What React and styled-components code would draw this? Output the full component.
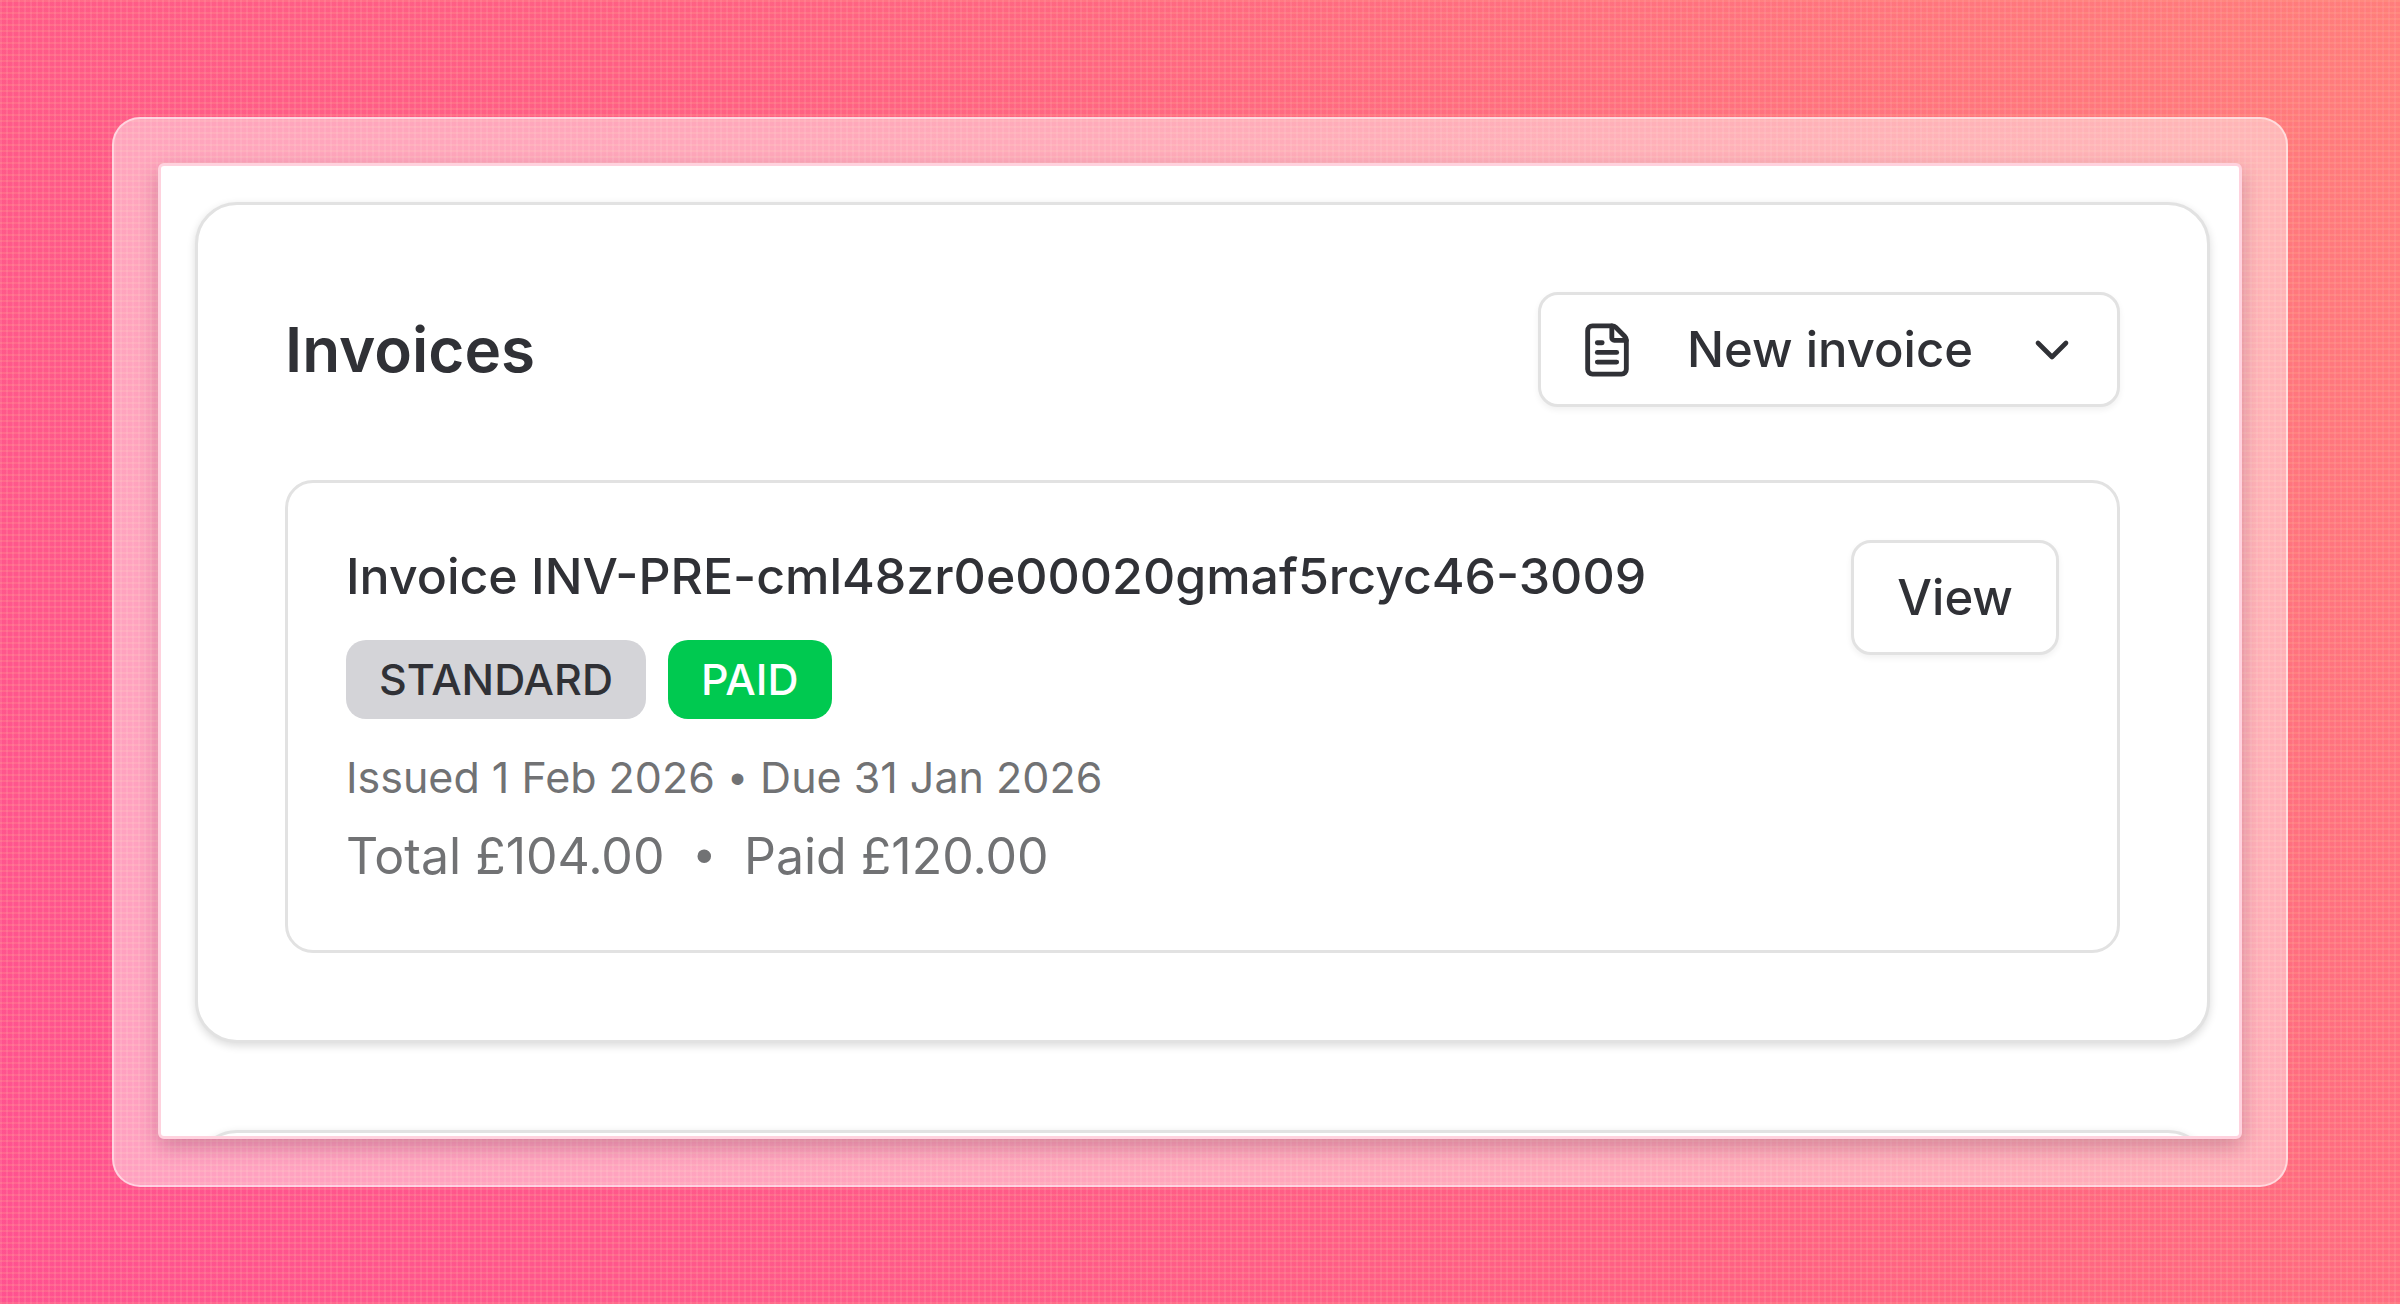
import React from 'react';
import styled, { createGlobalStyle } from 'styled-components';
import { ChevronDown, FileText } from 'lucide-react';

const ink = '#303136';
const muted = '#717274';
const line = '#e2e2e2';

const GlobalStyle = createGlobalStyle`
	* {
		box-sizing: border-box;
	}
	body {
		margin: 0;
		font-family: Inter, 'Liberation Sans', sans-serif;
		color: ${ink};
	}
	h1, h2, p {
		margin: 0;
	}
`
// fine 6px weave over the gradient
const Page = styled.main`
	display: flex;
	flex-direction: column;
	justify-content: center;
	min-height: 100vh;
	padding: 112px;
	background:
		repeating-linear-gradient(0deg, rgba(255, 150, 140, 0.28) 0 2px, rgba(255, 70, 140, 0.12) 2px 6px),
		repeating-linear-gradient(90deg, rgba(255, 150, 170, 0.28) 0 2px, rgba(255, 90, 130, 0.1) 2px 6px),
		linear-gradient(50deg, #ff5292 0%, #ff6582 50%, #ff8a78 100%);
`
const Frame = styled.div`
	padding: 44px 44px 46px;
	border: 2px solid rgba(255, 255, 255, 0.5);
	border-radius: 28px;
	background: rgba(255, 255, 255, 0.45);
`
const Screen = styled.div`
	display: flex;
	flex-direction: column;
	gap: 87px;
	height: 976px;
	padding: 36px 29px 0 34px;
	overflow: hidden;
	border: 3px solid #ffd2de;
	border-radius: 6px;
	background: #fff;
	box-shadow: 0 8px 20px rgba(90, 20, 50, 0.26);
`
const Card = styled.section`
	flex: none;
	display: flex;
	flex-direction: column;
	gap: 73px;
	padding: 87px;
	border: 3px solid ${line};
	border-radius: 42px;
	background: #fff;
	box-shadow: 0 3px 8px rgba(0, 0, 0, 0.14);
`
const CardHeader = styled.header`
	display: flex;
	align-items: center;
	justify-content: space-between;
`
const Title = styled.h1`
	font-size: 62px;
	font-weight: 600;
	line-height: 80px;
`
const Button = styled.button`
	display: flex;
	align-items: center;
	gap: 51px;
	height: 115px;
	padding: 0 ${props => props.$wide ? 37 : 43}px;
	border: 3px solid ${line};
	border-radius: 20px;
	background: #fff;
	box-shadow: 0 3px 6px rgba(0, 0, 0, 0.06);
	color: ${ink};
	font-family: inherit;
	font-size: 49px;
	font-weight: 500;
	line-height: 72px;
	cursor: pointer;
`
const Invoice = styled.article`
	display: flex;
	align-items: flex-start;
	justify-content: space-between;
	padding: 57px 58px 54px;
	border: 3px solid ${line};
	border-radius: 28px;
`
const Details = styled.div`
	display: flex;
	flex-direction: column;
`
const Name = styled.h2`
	font-size: 50px;
	font-weight: 500;
	line-height: 72px;
`
const Badges = styled.div`
	display: flex;
	gap: 22px;
	margin: 28px 0;
`
const Badge = styled.span`
	padding: 0 33px;
	border-radius: 20px;
	background: ${props => props.$paid ? '#00c950' : '#d4d4d8'};
	color: ${props => props.$paid ? '#fff' : ink};
	font-size: 43px;
	font-weight: 500;
	line-height: 79px;
`
const Meta = styled.p`
	color: ${muted};
	font-size: 43px;
	line-height: 60px;
`
const Totals = styled.p`
	display: flex;
	gap: 28px;
	margin-top: 8px;
	color: ${muted};
	font-size: 50px;
	line-height: 80px;
`
const Dot = styled.span`
	margin: 0 3px;
	font-family: 'Liberation Sans', sans-serif;
`

export default function App() {
	return (
		<>
			<GlobalStyle />
			<Page>
				<Frame>
					<Screen>
						<Card>
							<CardHeader>
								<Title>Invoices</Title>
								<Button $wide type="button">
									<FileText size={58} />
									New invoice
									<ChevronDown size={56} />
								</Button>
							</CardHeader>
							<Invoice>
								<Details>
									<Name>Invoice INV-PRE-cml48zr0e00020gmaf5rcyc46-3009</Name>
									<Badges>
										<Badge>STANDARD</Badge>
										<Badge $paid>PAID</Badge>
									</Badges>
									<Meta>Issued 1 Feb 2026 <Dot>•</Dot> Due 31 Jan 2026</Meta>
									<Totals>
										<span>Total £104.00</span>
										<Dot>•</Dot>
										<span>Paid £120.00</span>
									</Totals>
								</Details>
								<Button type="button">View</Button>
							</Invoice>
						</Card>
						<Card />
					</Screen>
				</Frame>
			</Page>
		</>
	);
}
